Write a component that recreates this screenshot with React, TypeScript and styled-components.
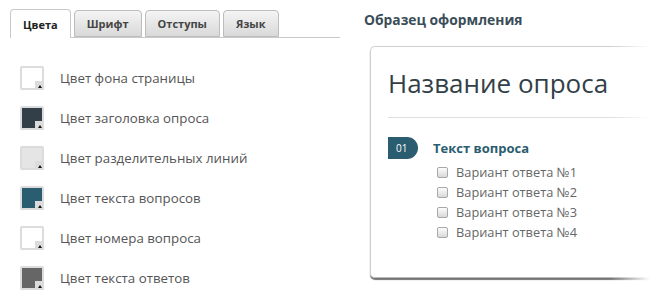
import React from "react";
import styled, { createGlobalStyle } from "styled-components";

const GlobalStyle = createGlobalStyle`
  html, body {
    margin: 0;
    padding: 0;
    background: #fff;
    overflow: hidden;
  }
  body {
    font-family: "Open Sans", "DejaVu Sans", sans-serif;
  }
`;

const Page = styled.div`
  display: flex;
  width: 650px;
  height: 306px;
  padding: 9px 0 0 10px;
  box-sizing: border-box;
  gap: 24px;
`;

// Левая колонка с вкладками
const Settings = styled.div`
  width: 330px;
  flex: none;
`;

const Tabs = styled.div`
  display: flex;
  gap: 3px;
  height: 28px;
  border-bottom: 1px solid #c9c9c9;
  align-items: flex-end;
`;

const Tab = styled.div<{ $active?: boolean }>`
  box-sizing: border-box;
  height: ${(p) => (p.$active ? "29px" : "27px")};
  margin-bottom: ${(p) => (p.$active ? "-1px" : "0")};
  padding: 0 12px;
  display: flex;
  align-items: center;
  font-size: 11px;
  font-weight: 700;
  color: ${(p) => (p.$active ? "#222" : "#444")};
  border: 1px solid ${(p) => (p.$active ? "#c9c9c9" : "#bdbdbd")};
  border-bottom: ${(p) => (p.$active ? "none" : "1px solid #bdbdbd")};
  border-radius: 4px 4px 0 0;
  background: ${(p) =>
    p.$active ? "#fff" : "linear-gradient(#f4f4f4, #d9d9d9)"};
`;

const Options = styled.div`
  display: flex;
  flex-direction: column;
  gap: 16px;
  padding: 28px 0 0 10px;
`;

const Option = styled.div`
  display: flex;
  align-items: center;
  gap: 16px;
  height: 24px;
  font-size: 13.3px;
  color: #555;
`;

const Swatch = styled.div`
  position: relative;
  width: 24px;
  height: 24px;
  box-sizing: border-box;
  padding: 2px;
  border-radius: 2px;
  background: #dcdcdc;
`;

const SwatchFill = styled.div<{ $color: string }>`
  width: 100%;
  height: 100%;
  background: ${(p) => p.$color};
`;

const SwatchCorner = styled.div`
  position: absolute;
  right: 0;
  bottom: 0;
  width: 9px;
  height: 9px;
  background: #dcdcdc;
  display: flex;
  align-items: center;
  justify-content: center;

  &::after {
    content: "";
    border-left: 2.5px solid transparent;
    border-right: 2.5px solid transparent;
    border-bottom: 3px solid #111;
    margin-top: 1px;
  }
`;

// Правая колонка с образцом
const Preview = styled.div`
  flex: 1;
  display: flex;
  flex-direction: column;
  min-width: 0;
`;

const PreviewTitle = styled.div`
  font-size: 13.8px;
  font-weight: 700;
  color: #3b4d58;
  margin-top: 1px;
  height: 36px;
`;

const Card = styled.div`
  position: relative;
  margin-left: 6px;
  height: 232px;
  box-sizing: border-box;
  border: 1px solid #cfcfcf;
  border-right: none;
  border-bottom-color: #bbb;
  border-radius: 5px 0 0 5px;
  box-shadow: 0 2px 1px rgba(0, 0, 0, 0.55);
  padding: 16px 0 0 17px;

  &::after {
    content: "";
    position: absolute;
    top: -2px;
    bottom: -4px;
    right: 0;
    width: 40px;
    background: linear-gradient(to right, rgba(255, 255, 255, 0), #fff);
  }
`;

const PollName = styled.div`
  font-size: 26px;
  color: #333f48;
  line-height: 40px;
  padding-bottom: 14px;
  border-bottom: 1px solid #dedede;
`;

const Question = styled.div`
  display: flex;
  align-items: center;
  gap: 15px;
  margin-top: 19px;
`;

const Number = styled.div`
  width: 30px;
  height: 22px;
  box-sizing: border-box;
  padding-left: 8px;
  display: flex;
  align-items: center;
  background: #2a5d6f;
  color: #fff;
  font-size: 10px;
  border-radius: 0 11px 11px 0;
`;

const QuestionText = styled.div`
  font-size: 13px;
  font-weight: 700;
  color: #2a5d6f;
`;

const Answers = styled.div`
  display: flex;
  flex-direction: column;
  padding: 3px 0 0 49px;
`;

const Answer = styled.label`
  display: flex;
  align-items: center;
  gap: 8px;
  height: 20px;
  font-size: 12.8px;
  color: #666;
`;

const Check = styled.span`
  width: 9px;
  height: 9px;
  border: 1px solid #a8a8a8;
  border-radius: 2px;
  background: linear-gradient(#fdfdfd, #d8d8d8);
`;

const colors = [
  { label: "Цвет фона страницы", color: "#ffffff" },
  { label: "Цвет заголовка опроса", color: "#333f48" },
  { label: "Цвет разделительных линий", color: "#e5e5e5" },
  { label: "Цвет текста вопросов", color: "#2a5d6f" },
  { label: "Цвет номера вопроса", color: "#ffffff" },
  { label: "Цвет текста ответов", color: "#666666" },
];

const tabs = ["Цвета", "Шрифт", "Отступы", "Язык"];

export default function App() {
  return (
    <>
      <GlobalStyle />
      <Page>
        <Settings>
          <Tabs>
            {tabs.map((t, i) => (
              <Tab key={t} $active={i === 0}>
                {t}
              </Tab>
            ))}
          </Tabs>
          <Options>
            {colors.map((c) => (
              <Option key={c.label}>
                <Swatch>
                  <SwatchFill $color={c.color} />
                  <SwatchCorner />
                </Swatch>
                {c.label}
              </Option>
            ))}
          </Options>
        </Settings>
        <Preview>
          <PreviewTitle>Образец оформления</PreviewTitle>
          <Card>
            <PollName>Название опроса</PollName>
            <Question>
              <Number>01</Number>
              <QuestionText>Текст вопроса</QuestionText>
            </Question>
            <Answers>
              {[1, 2, 3, 4].map((n) => (
                <Answer key={n}>
                  <Check />
                  Вариант ответа №{n}
                </Answer>
              ))}
            </Answers>
          </Card>
        </Preview>
      </Page>
    </>
  );
}
